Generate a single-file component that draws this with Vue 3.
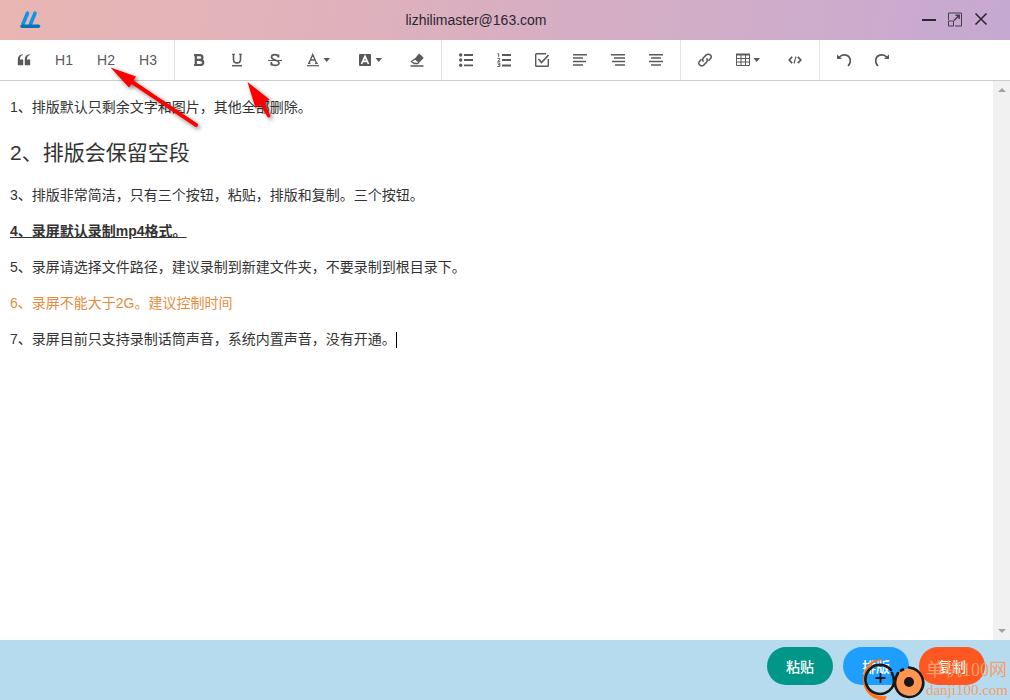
<script setup>
const headings = ['H1', 'H2', 'H3']
const actions = [
  { label: '粘贴', tone: 'teal' },
  { label: '排版', tone: 'blue' },
  { label: '复制', tone: 'orange' },
]
</script>

<template>
  <div class="app">
    <header class="titlebar">
      <div class="logo">
        <svg width="22" height="20" viewBox="0 0 22 20" aria-hidden="true">
          <path d="M8.500 3.200 4 14M16 3.200 11.500 14" fill="none" stroke="#0b97e6" stroke-width="3.600" stroke-linecap="round" />
          <path d="M3 16.300H19.500" fill="none" stroke="#0673b8" stroke-width="3.400" stroke-linecap="round" />
        </svg>
      </div>
      <h1 class="title">lizhilimaster@163.com</h1>
      <div class="controls">
        <button aria-label="最小化">
          <svg width="16" height="16" viewBox="0 0 16 16"><path d="M1 8H15" stroke="#2b2630" stroke-width="2" /></svg>
        </button>
        <button aria-label="最大化">
          <svg width="16" height="16" viewBox="0 0 16 16" fill="none" stroke="#453d4a">
            <path d="M1.500 8V1H14.500V14H8M1.500 9H6.500V14H1.500Z" />
            <path d="M7 8.500 12 3.500M8.500 3.300H12.200V7" stroke-width="1.500" />
          </svg>
        </button>
        <button aria-label="关闭">
          <svg width="16" height="16" viewBox="0 0 16 16"><path d="M2.500 1.500 13.500 12.500M13.500 1.500 2.500 12.500" stroke="#2b2630" stroke-width="1.600" /></svg>
        </button>
      </div>
    </header>

    <div class="toolbar" role="toolbar">
      <div class="group">
        <button class="tool" aria-label="引用">
          <svg width="14" height="14" viewBox="0 0 14 14" fill="#595959">
            <path d="M6 2C3.800 2.600 3 4 3 6.500H6.200V12.300H.8V7C.8 3.500 2.300 1.500 6 1.200ZM13 2C10.800 2.600 10 4 10 6.500H13.200V12.300H7.800V7C7.800 3.500 9.300 1.500 13 1.200Z" />
          </svg>
        </button>
        <button v-for="h in headings" :key="h" class="tool heading">{{ h }}</button>
      </div>

      <div class="group">
        <button class="tool" aria-label="加粗">
          <svg width="14" height="14" viewBox="0 0 14 14" fill="none" stroke="#595959" stroke-width="2.200">
            <path d="M2 2.100H7.500C11.500 2.100 11.500 6.800 7.500 6.800H4M7.500 6.800C12.500 6.800 12.500 12 7.500 12H2M3.800 2V12" />
          </svg>
        </button>
        <button class="tool" aria-label="下划线">
          <svg width="14" height="14" viewBox="0 0 14 14" fill="none" stroke="#595959">
            <path d="M3.500 1V6.500C3.500 11 10.500 11 10.500 6.500V1" stroke-width="1.600" />
            <path d="M2 1.200H5M9 1.200H12" /><path d="M2 12.700H12" stroke-width="1.500" />
          </svg>
        </button>
        <button class="tool" aria-label="删除线">
          <svg width="14" height="14" viewBox="0 0 14 14" fill="none" stroke="#595959">
            <path d="M10.500 4.200C10 .8 3.500.8 3.500 4.200C3.500 7.500 11 6.500 11 10C11 13.400 3.500 13.200 3.300 9.500M10.500 1.500V4.500M3.300 9V12.500" stroke-width="1.700" />
            <path d="M0 7.500H14" />
          </svg>
        </button>
        <button class="tool" aria-label="文字颜色">
          <svg width="24" height="14" viewBox="0 0 24 14" fill="none" stroke="#595959">
            <path d="M3 10 6.700 1.500 10.500 10M4.300 7H9.200M2 10.300H4.500M9 10.300H11.800" stroke-width="1.300" />
            <path d="M1 12.700H13" stroke-width="1.200" /><path d="M17.500 5H24L20.750 9Z" fill="#595959" stroke="none" />
          </svg>
        </button>
        <button class="tool" aria-label="背景颜色">
          <svg width="24" height="14" viewBox="0 0 24 14" fill="none">
            <rect x="1" y="1" width="12" height="12" rx="1" fill="#595959" />
            <path d="M3.500 11 7 3.300 10.500 11M4.800 8.300H9.200" stroke="#fff" stroke-width="1.700" />
            <path d="M17.500 5H24L20.750 9Z" fill="#595959" />
          </svg>
        </button>
        <button class="tool" aria-label="清除格式">
          <svg width="14" height="14" viewBox="0 0 14 14" fill="none" stroke="#595959">
            <path d="M5 6 9.200 1 13.200 4.800 9 9.500Z" fill="#595959" />
            <path d="M5 6 1.500 8.500 4.200 10.500H7.500L9 9.500" stroke-width="1.300" /><path d="M.5 13H13.500" stroke-width="1.500" />
          </svg>
        </button>
      </div>

      <div class="group">
        <button class="tool" aria-label="无序列表">
          <svg width="14" height="14" viewBox="0 0 14 14" fill="#595959">
            <circle cx="1.700" cy="2" r="1.700" /><circle cx="1.700" cy="7" r="1.700" /><circle cx="1.700" cy="12.200" r="1.700" />
            <path d="M5 1H14V3H5ZM5 6H14V8H5ZM5 11.500H14V13.300H5Z" />
          </svg>
        </button>
        <button class="tool" aria-label="有序列表">
          <svg width="14" height="14" viewBox="0 0 14 14" fill="none" stroke="#595959">
            <path d="M5 2H14M5 7H14M5 12.500H14" stroke-width="1.800" />
            <path d="M.5.700H1.700V3.800M.5 5.400H2.700V6.700L.8 8.300H3.200M.3 10H2.800V13.500H.3M1 11.700H2.700" />
          </svg>
        </button>
        <button class="tool" aria-label="待办">
          <svg width="14" height="14" viewBox="0 0 14 14" fill="none" stroke="#595959">
            <path d="M11 .8H1.500Q.7.800.7 1.600V12.500Q.7 13.300 1.500 13.300H12.500Q13.300 13.300 13.300 12.500V6" stroke-width="1.400" />
            <path d="M3.500 6 6.500 9.500 13.500 2" stroke-width="1.700" />
          </svg>
        </button>
        <button class="tool" aria-label="左对齐">
          <svg width="14" height="14" viewBox="0 0 14 14"><path d="M0 1.700H14M0 5H10M0 8.500H13M0 12H10" stroke="#595959" stroke-width="1.500" /></svg>
        </button>
        <button class="tool" aria-label="右对齐">
          <svg width="14" height="14" viewBox="0 0 14 14"><path d="M0 1.700H14M3 5H14M1 8.500H14M4 12H14" stroke="#595959" stroke-width="1.500" /></svg>
        </button>
        <button class="tool" aria-label="居中">
          <svg width="14" height="14" viewBox="0 0 14 14"><path d="M0 1.700H14M2 5H12M0 8.500H14M2 12H12" stroke="#595959" stroke-width="1.500" /></svg>
        </button>
      </div>

      <div class="group">
        <button class="tool" aria-label="链接">
          <svg width="14" height="14" viewBox="0 0 14 14" fill="none" stroke="#595959" stroke-width="1.500">
            <path d="M5.500 8.700C4.200 7.200 4.500 6 5.500 4.800L8.500 1.700C11 .2 14.200 2.500 12.900 5L10.500 7.700" />
            <path d="M8.500 5.300C9.800 6.800 9.500 8 8.500 9.200L5.500 12.300C3 13.800-.2 11.500 1.100 9L3.500 6.300" />
          </svg>
        </button>
        <button class="tool" aria-label="表格">
          <svg width="24" height="14" viewBox="0 0 24 14" fill="none" stroke="#595959">
            <path d="M0 1.500H14" stroke-width="2" />
            <path d="M.5 1V12.500H13.500V1M0 5.500H14M0 9H14M5 2V12M9.500 2V12" />
            <path d="M17.500 5H24L20.750 9Z" fill="#595959" stroke="none" />
          </svg>
        </button>
        <button class="tool" aria-label="代码">
          <svg width="14" height="14" viewBox="0 0 14 14" fill="none" stroke="#595959" stroke-width="1.700">
            <path d="M4.200 3.800 1.200 7 4.200 10.200M9.800 3.800 12.800 7 9.800 10.200" /><path d="M8 3.500 6 10.500" stroke-width="1.100" />
          </svg>
        </button>
      </div>

      <div class="group">
        <button class="tool" aria-label="撤销">
          <svg width="14" height="14" viewBox="0 0 14 14" fill="none" stroke="#595959">
            <path d="M2 4.500C6-.5 13.300 2 13.300 8C13.300 10 12.500 11.500 11 12.800" stroke-width="1.700" /><path d="M0 1.500V6H5Z" fill="#595959" stroke="none" />
          </svg>
        </button>
        <button class="tool" aria-label="重做">
          <svg width="14" height="14" viewBox="0 0 14 14" fill="none" stroke="#595959">
            <path d="M12 4.500C8-.5.7 2 .7 8C.7 10 1.500 11.500 3 12.800" stroke-width="1.700" /><path d="M14 1.500V6H9Z" fill="#595959" stroke="none" />
          </svg>
        </button>
      </div>
    </div>

    <main class="workspace">
      <div class="editor" contenteditable="true" spellcheck="false" role="textbox" aria-label="正文" aria-multiline="true">
        <p>1、排版默认只剩余文字和图片，其他全部删除。</p>
        <h2>2、排版会保留空段</h2>
        <p>3、排版非常简洁，只有三个按钮，粘贴，排版和复制。三个按钮。</p>
        <p><b><u>4、录屏默认录制mp4格式。</u></b></p>
        <p>5、录屏请选择文件路径，建议录制到新建文件夹，不要录制到根目录下。</p>
        <p class="accent">6、录屏不能大于2G。建议控制时间</p>
        <p>7、录屏目前只支持录制话筒声音，系统内置声音，没有开通。<span class="caret"></span></p>
      </div>
      <div class="scrollbar">
        <button aria-label="向上滚动"><svg width="8" height="4" viewBox="0 0 8 4"><path d="M0 4 4 0 8 4Z" fill="#a3a3a3" /></svg></button>
        <button aria-label="向下滚动"><svg width="8" height="4" viewBox="0 0 8 4"><path d="M0 0 4 4 8 0Z" fill="#a3a3a3" /></svg></button>
      </div>
    </main>

    <footer class="actions">
      <button v-for="a in actions" :key="a.label" :class="['action', a.tone]">{{ a.label }}</button>
    </footer>

    <svg class="pointers" width="290" height="140" viewBox="0 0 290 140" aria-hidden="true">
      <g fill="#f00">
        <path d="M110.500 67.500 136 76.500 133.500 80.500 198 124Q198.500 127 195.500 127L131.500 84 129 87.500Z" />
        <path d="M247.500 82 269.500 99.500 264.500 102.500 270.500 116Q269.500 118.500 267.500 117L260.500 104.800 255.500 108Z" />
      </g>
    </svg>

    <div class="watermark">
      <svg width="64" height="42" viewBox="0 0 64 42" fill="none" aria-hidden="true">
        <path d="M21 3C13 1 4 9 4 20C4 32 13 40 25 38L23 42C10 43 0 32 1 20C2 9 9 2 15 2Q18-1 21 3Z" fill="#ff7417" />
        <circle cx="47" cy="24" r="13.500" fill="#ff9550" />
        <path d="M29 12A14.500 14.500 0 1 0 32 25C32 20 31 17 30 15M36 15C33 20 32 25 34 30C38 40 51 42 58 34C65 25 60 11 47 9.500" stroke="#1b1718" stroke-width="2.600" stroke-linecap="round" />
        <path d="M38 13 42 11" stroke="#1b1718" stroke-width="2.600" />
        <circle cx="47" cy="24" r="5" fill="#1b1718" />
        <path d="M18.500 15V25M13.500 20H23.500" stroke="#1b1718" stroke-width="1.800" />
      </svg>
      <div class="mark-text">
        <span class="mark-name">单机100网</span>
        <span class="mark-site">danji100.com</span>
      </div>
    </div>
  </div>
</template>

<style>
body {
  margin: 0;
}
</style>

<style scoped>
.app {
  position: relative;
  display: flex;
  flex-direction: column;
  min-height: 100vh;
  overflow: hidden;
  background: #fff;
  color: #333;
  font: 14px/22px "Liberation Sans", "Noto Sans CJK SC", sans-serif;
}
button {
  display: flex;
  align-items: center;
  justify-content: center;
  border: 0;
  padding: 0;
  background: none;
  color: inherit;
  font: inherit;
}
.titlebar {
  display: flex;
  align-items: center;
  height: 40px;
  background: linear-gradient(100deg, #e9b6b3, #deb1bc 35%, #c6a9d2);
}
.logo {
  display: flex;
  width: 31px;
  padding-left: 19px;
}
.title {
  flex: 1;
  margin: 0;
  color: #2b2630;
  font-size: 14px;
  font-weight: 400;
  text-align: center;
}
.controls {
  display: flex;
  padding: 0 16px 0 14px;
}
.controls button {
  width: 26px;
  height: 26px;
}
.toolbar {
  display: flex;
  border-bottom: 1px solid #ccc;
}
.group {
  display: flex;
  height: 40px;
  padding: 0 5px;
  border-right: 1px solid #e4e4e4;
}
.group:last-child {
  border-right: 0;
}
.tool {
  padding: 0 12px;
  color: #595959;
}
.tool:has(svg[width="24"]) {
  padding-right: 16px;
}
.tool.heading {
  width: 42px;
}
.workspace {
  display: flex;
  flex: 1;
}
.editor {
  flex: 1;
  padding: 15px 10px;
  outline: 0;
}
.editor p {
  margin: 0 0 14px;
}
.editor h2 {
  margin: 20px 0 16px;
  font-size: 21px;
  font-weight: 400;
  line-height: 30px;
}
.editor .accent {
  color: #e78c3c;
}
.caret {
  display: inline-block;
  width: 1px;
  height: 16px;
  background: #000;
  vertical-align: middle;
}
.scrollbar {
  display: flex;
  flex-direction: column;
  justify-content: space-between;
  width: 17px;
  background: #f1f1f1;
}
.scrollbar button {
  height: 18px;
}
.actions {
  display: flex;
  justify-content: flex-end;
  gap: 10px;
  padding: 7px 25px 15px;
  background: #b6dbee;
}
.action {
  width: 66px;
  height: 38px;
  border-radius: 19px;
  color: #fff;
  font-weight: 500;
  font-family: "Noto Sans CJK SC", sans-serif;
}
.teal {
  background: #009688;
}
.blue {
  background: #1e9fff;
}
.orange {
  background: #ff5722;
}
.pointers {
  position: absolute;
  top: 0;
  left: 0;
  filter: drop-shadow(2px 2px 2px rgba(0, 0, 0, .5));
  pointer-events: none;
}
.watermark {
  position: absolute;
  right: 2px;
  bottom: 0;
  display: flex;
  align-items: flex-end;
  color: #f3a06c;
  font-family: "Liberation Serif", "Noto Sans CJK SC", serif;
  pointer-events: none;
}
.mark-text {
  display: flex;
  flex-direction: column;
}
.mark-name {
  font-size: 18px;
  line-height: 20px;
}
.mark-site {
  font-size: 15px;
  line-height: 20px;
}
</style>
